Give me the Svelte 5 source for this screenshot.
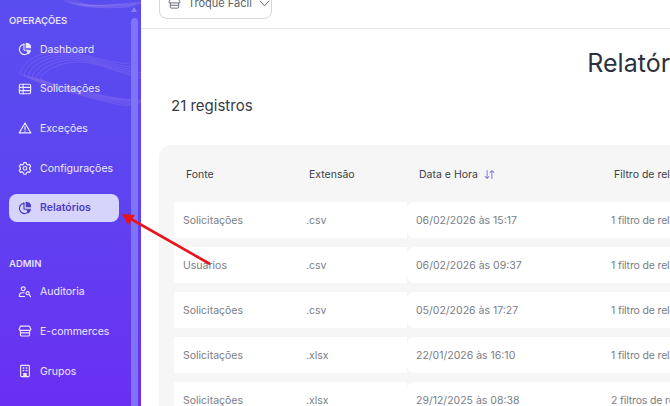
<script lang="ts">
	type Row = { source: string; ext: string; date: string; filter: string };

	const rows: Row[] = [
		{ source: 'Solicitações', ext: '.csv', date: '06/02/2026 às 15:17', filter: '1 filtro de relatório' },
		{ source: 'Usuarios', ext: '.csv', date: '06/02/2026 às 09:37', filter: '1 filtro de relatório' },
		{ source: 'Solicitações', ext: '.csv', date: '05/02/2026 às 17:27', filter: '1 filtro de relatório' },
		{ source: 'Solicitações', ext: '.xlsx', date: '22/01/2026 às 16:10', filter: '1 filtro de relatório' },
		{ source: 'Solicitações', ext: '.xlsx', date: '29/12/2025 às 08:38', filter: '2 filtros de relatório' }
	];

	const operations = [
		{ label: 'Dashboard', icon: 'chart' },
		{ label: 'Solicitações', icon: 'table' },
		{ label: 'Exceções', icon: 'warn' },
		{ label: 'Configurações', icon: 'gear' },
		{ label: 'Relatórios', icon: 'chart', active: true }
	];
	const admin = [
		{ label: 'Auditoria', icon: 'users' },
		{ label: 'E-commerces', icon: 'store' },
		{ label: 'Grupos', icon: 'building' }
	];
</script>

{#snippet navIcon(name: string)}
	<svg class="nav-icon" viewBox="0 0 16 16" fill="none" stroke="currentColor" stroke-width="1.3" stroke-linejoin="round" stroke-linecap="round">
		{#if name === 'chart'}
			<path d="M6.8 2.4a6 6 0 1 0 6.4 8.2" />
			<path d="M6.8 2.4v6.4q0 .6.6.6h6.8" />
			<path d="M9.4 1.6a5.2 5.2 0 0 1 5 5H9.4z" fill="currentColor" />
			<path d="M10.4 10.6h3.6l-2 2.8z" fill="currentColor" />
		{:else if name === 'table'}
			<rect x="1.6" y="2.6" width="12.8" height="10.8" rx="1.4" />
			<path d="M1.6 6.2h12.8M1.6 9.8h12.8M6 2.6v10.8" />
		{:else if name === 'warn'}
			<path d="M8 2.2 14.6 13.6H1.4z" />
			<path d="M8 6.4v3.4M8 11.6v.2" />
		{:else if name === 'gear'}
			<path d="M6.6 1.8h2.8l.4 1.8 1.6.9 1.8-.6 1.4 2.4-1.4 1.2v1.9l1.4 1.2-1.4 2.4-1.8-.6-1.6.9-.4 1.8H6.6l-.4-1.8-1.6-.9-1.8.6-1.4-2.4 1.4-1.2V7.5L1.4 6.3l1.4-2.4 1.8.6 1.6-.9z" />
			<circle cx="8" cy="8.4" r="2.1" />
		{:else if name === 'users'}
			<circle cx="6" cy="4.4" r="2.2" />
			<path d="M1.6 13.2v-1.4a3 3 0 0 1 3-3h2.4M1.6 13.2h6" />
			<circle cx="11" cy="9.4" r="1.8" />
			<path d="M12.4 10.8l2 2.4" />
		{:else if name === 'store'}
			<path d="M3 2.4h10l1.6 3.2a1.2 1.2 0 0 1-1.1 1.7h-11a1.2 1.2 0 0 1-1.1-1.7z" />
			<path d="M2.8 7.3v5a1.4 1.4 0 0 0 1.4 1.4h7.6a1.4 1.4 0 0 0 1.4-1.4v-5M3 10.2h10" />
		{:else if name === 'building'}
			<rect x="3" y="1.6" width="10" height="12.8" rx="1" />
			<path d="M6 4.6h.6M9.4 4.6h.6M6 7.4h.6M9.4 7.4h.6" stroke-width="1.6" />
			<path d="M6.6 14.4v-3.6h2.8v3.6" fill="currentColor" />
		{/if}
	</svg>
{/snippet}

<div class="page">
	<aside class="sidebar">
		<svg class="waves" viewBox="0 0 141 406" fill="none" stroke="#ffd9e8" stroke-opacity="0.2" stroke-width="0.6" aria-hidden="true">
			{#each [0, 1, 2, 3, 4, 5] as i}
				<path d="M{60 + i * 3} {-2 + 0}c8 {6 + i} 26 {12 - i} 70 {9 - i}" />
				<path d="M{20 + i * 4} {74 + i}c2 -{12 - i} 18 -{22 - i} 38 -{22 - i}c26 0 44 {10 + i} 72 {12 + i}" />
				<path d="M{20 + i * 4} {74 + i}c12 {6} 34 {14 - i} 56 {20 - i}c20 5 40 {11 - i} 54 {12 - i}" />
			{/each}
		</svg>
		<div class="scrollbar">
			<span class="scroll-up"></span>
			<span class="scroll-thumb"></span>
		</div>
		<nav class="nav">
			<h2 class="section-label">OPERAÇÕES</h2>
			<ul class="nav-list">
				{#each operations as item}
					<li class="nav-item" class:active={item.active}>
						{@render navIcon(item.icon)}
						<span>{item.label}</span>
					</li>
				{/each}
			</ul>
			<h2 class="section-label section-admin">ADMIN</h2>
			<ul class="nav-list">
				{#each admin as item}
					<li class="nav-item">
						{@render navIcon(item.icon)}
						<span>{item.label}</span>
					</li>
				{/each}
			</ul>
		</nav>
	</aside>

	<main class="main">
		<header class="topbar">
			<button class="store-select">
				<svg class="store-icon" viewBox="0 0 16 16" fill="none" stroke="currentColor" stroke-width="1.1" stroke-linejoin="round">
					<path d="M3 2.4h10l1.6 3.2a1.2 1.2 0 0 1-1.1 1.7h-11a1.2 1.2 0 0 1-1.1-1.7z" />
					<path d="M2.8 7.3v5a1.4 1.4 0 0 0 1.4 1.4h7.6a1.4 1.4 0 0 0 1.4-1.4v-5M3 10.2h10" />
				</svg>
				<span>Troque Fácil</span>
				<svg class="chevron" viewBox="0 0 12 8" fill="none" stroke="currentColor" stroke-width="1.1" stroke-linecap="round" stroke-linejoin="round">
					<path d="M1 1.2 6 6.6l5-5.4" />
				</svg>
			</button>
			<a class="search-link" href="#busca">
				<svg class="scan-icon" viewBox="0 0 16 16" fill="none" stroke="currentColor" stroke-width="1.2" stroke-linecap="round">
					<path d="M1.2 4V2.4a1 1 0 0 1 1-1h1.4M12.4 1.4h1.4a1 1 0 0 1 1 1V4M1.2 12v1.6a1 1 0 0 0 1 1h1.4M12.4 14.6h1.4a1 1 0 0 0 1-1V12" />
					<path d="M4.6 1.4v9M7 1.4v9M9.2 1.4v9M11.4 1.4v9" />
				</svg>
				<span>Buscar pedido</span>
			</a>
		</header>

		<h1 class="title">Relatórios</h1>
		<p class="count">21 registros</p>

		<section class="card">
			<div class="table-head">
				<span>Fonte</span>
				<span>Extensão</span>
				<span class="sortable">
					Data e Hora
					<svg class="sort-icon" viewBox="0 0 12 12" fill="none" stroke="currentColor" stroke-width="1.2" stroke-linecap="round" stroke-linejoin="round">
						<path d="M3.4 1.6v8.6M1.4 8.2l2 2 2-2M8.6 10.4V1.8M6.6 3.8l2-2 2 2" />
					</svg>
				</span>
				<span>Filtro de relatório</span>
			</div>
			{#each rows as row}
				<div class="table-row">
					<div class="cell-group">
						<span>{row.source}</span>
						<span>{row.ext}</span>
					</div>
					<div class="cell-group cell-rest">
						<span>{row.date}</span>
						<span class="filter">{row.filter}</span>
					</div>
				</div>
			{/each}
		</section>
	</main>

	<svg class="arrow" viewBox="0 0 670 406" aria-hidden="true">
		<path d="M210 264 131 219" stroke="#e8141c" stroke-width="2.6" fill="none" />
		<path d="M122 214 135 215 128 225z" fill="#e8141c" />
	</svg>
</div>

<style>
	:global(body) {
		margin: 0;
		font-family: 'Inter', 'Liberation Sans', sans-serif;
		background: #fff;
	}
	.page {
		position: relative;
		display: flex;
		width: 670px;
		height: 406px;
		overflow: hidden;
	}
	.sidebar {
		position: relative;
		flex: 0 0 141px;
		height: 406px;
		overflow: hidden;
		background: linear-gradient(180deg, #5a4df0 0%, #5c46f0 40%, #6a2ff2 100%);
	}
	.waves {
		position: absolute;
		inset: 0;
		width: 141px;
		height: 406px;
	}
	.scrollbar {
		position: absolute;
		top: 0;
		left: 131px;
		width: 7px;
		height: 406px;
	}
	.scroll-up {
		position: absolute;
		top: 7px;
		left: 0;
		border-left: 3.5px solid transparent;
		border-right: 3.5px solid transparent;
		border-bottom: 5px solid #8a7df8;
	}
	.scroll-thumb {
		position: absolute;
		top: 18px;
		left: 0;
		width: 7px;
		bottom: -10px;
		border-radius: 4px 4px 0 0;
		background: #7f74f8;
	}
	.nav {
		position: relative;
		padding: 15px 22px 0 9px;
		color: #ece9ff;
	}
	.section-label {
		margin: 0;
		height: 12px;
		font-size: 9.5px;
		line-height: 12px;
		font-weight: 600;
		color: #e4e1ff;
	}
	.section-admin {
		margin-top: 36px;
	}
	.nav-list {
		display: flex;
		flex-direction: column;
		gap: 11.7px;
		margin: 8px 0 0;
		padding: 0;
		list-style: none;
	}
	.nav-list:last-child {
		margin-top: 8px;
	}
	.nav-item {
		display: flex;
		align-items: center;
		gap: 8px;
		height: 28px;
		padding-left: 9px;
		border-radius: 8px;
		font-size: 10.5px;
		font-weight: 400;
		white-space: nowrap;
	}
	.nav-item.active {
		background: #d6d4fb;
		color: #4a3dc4;
		font-weight: 600;
	}
	.nav-icon {
		flex: none;
		width: 14px;
		height: 14px;
	}
	.main {
		flex: 0 0 1014px;
		color: #2f3440;
	}
	.topbar {
		display: flex;
		align-items: flex-end;
		justify-content: space-between;
		box-sizing: border-box;
		height: 29px;
		padding: 0 0 9px 18px;
		border-bottom: 1px solid #e3e4e8;
	}
	.store-select {
		display: flex;
		flex: none;
		align-items: center;
		gap: 7px;
		box-sizing: border-box;
		width: 113px;
		height: 32px;
		padding: 0 0 0 8px;
		border: 1px solid #d4d6db;
		border-radius: 8px;
		background: #fff;
		font-family: inherit;
		font-size: 11px;
		color: #5b606b;
		white-space: nowrap;
	}
	.store-icon {
		flex: none;
		width: 13px;
		height: 13px;
	}
	.chevron {
		flex: none;
		width: 11px;
		height: 7px;
	}
	.search-link {
		display: flex;
		align-items: center;
		gap: 6px;
		margin-right: 333px;
		margin-bottom: 9px;
		font-size: 10.5px;
		font-weight: 700;
		color: #7b6ff6;
		text-decoration: none;
		white-space: nowrap;
	}
	.scan-icon {
		width: 14px;
		height: 14px;
	}
	.title {
		margin: 19px 0 0;
		padding-right: 4px;
		font-size: 25px;
		line-height: 30px;
		font-weight: 400;
		text-align: center;
		color: #2c3140;
	}
	.count {
		margin: 18px 0 0 30px;
		font-size: 15px;
		line-height: 20px;
		color: #343a46;
	}
	.card {
		margin: 29px 0 0 18px;
		padding: 0 0 0 15px;
		border-radius: 12px;
		background: #f6f6f6;
	}
	.table-head {
		display: grid;
		grid-template-columns: 123px 110px 195px 1fr;
		align-items: center;
		box-sizing: border-box;
		height: 57px;
		padding: 1px 0 0 12px;
		font-size: 10.5px;
		color: #3c4048;
	}
	.sortable {
		display: flex;
		align-items: center;
		gap: 6px;
	}
	.sort-icon {
		width: 11px;
		height: 11px;
		color: #8a80f5;
	}
	.table-row {
		display: flex;
		height: 36px;
		margin-bottom: 9px;
		font-size: 10.5px;
		color: #7a7d85;
	}
	.cell-group {
		display: grid;
		align-items: center;
		grid-template-columns: 123px 1fr;
		box-sizing: border-box;
		width: 233px;
		padding: 1px 0 0 9px;
		background: #fff;
	}
	.cell-rest {
		flex: 1;
		grid-template-columns: 195px 1fr;
		border-radius: 8px 0 0 8px;
	}
	.filter {
		letter-spacing: -0.15px;
	}
	.arrow {
		position: absolute;
		inset: 0;
		width: 670px;
		height: 406px;
		pointer-events: none;
	}
</style>
